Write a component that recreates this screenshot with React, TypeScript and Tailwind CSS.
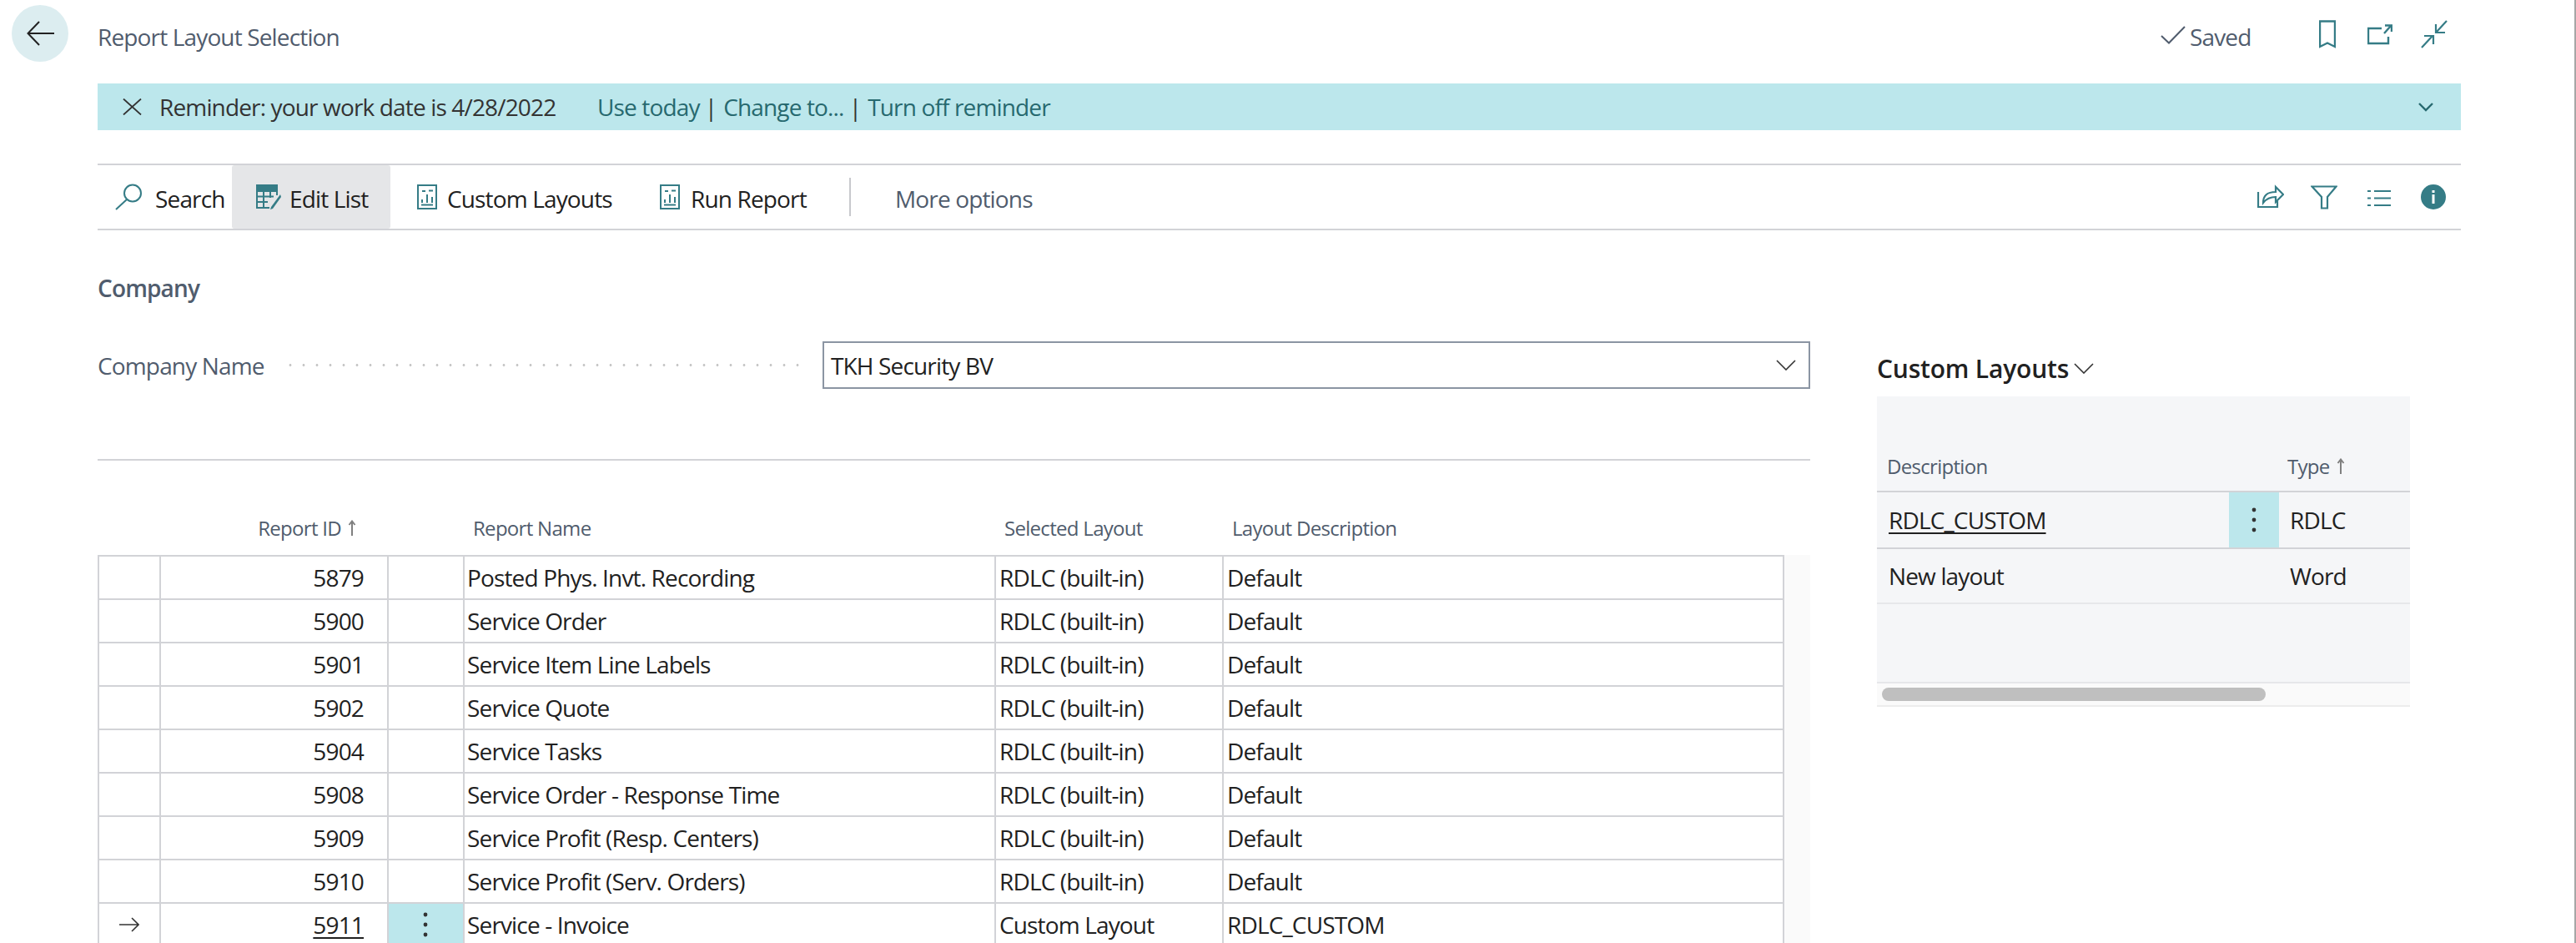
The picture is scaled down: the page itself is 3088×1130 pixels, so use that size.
const teal = "#357c86";

const rows = [
  { id: "5879", name: "Posted Phys. Invt. Recording", layout: "RDLC (built-in)", desc: "Default" },
  { id: "5900", name: "Service Order", layout: "RDLC (built-in)", desc: "Default" },
  { id: "5901", name: "Service Item Line Labels", layout: "RDLC (built-in)", desc: "Default" },
  { id: "5902", name: "Service Quote", layout: "RDLC (built-in)", desc: "Default" },
  { id: "5904", name: "Service Tasks", layout: "RDLC (built-in)", desc: "Default" },
  { id: "5908", name: "Service Order - Response Time", layout: "RDLC (built-in)", desc: "Default" },
  { id: "5909", name: "Service Profit (Resp. Centers)", layout: "RDLC (built-in)", desc: "Default" },
  { id: "5910", name: "Service Profit (Serv. Orders)", layout: "RDLC (built-in)", desc: "Default" },
  { id: "5911", name: "Service - Invoice", layout: "Custom Layout", desc: "RDLC_CUSTOM", current: true },
];

function SortArrow() {
  return (
    <svg width="10" height="20" viewBox="0 0 10 20" fill="none" stroke="#808080" strokeWidth="2">
      <path d="M5 19V2M1.5 6L5 1.5L8.5 6" />
    </svg>
  );
}

function Kebab() {
  return (
    <svg width="6" height="32" viewBox="0 0 6 32" fill="#333">
      <circle cx="3" cy="4" r="2.4" />
      <circle cx="3" cy="16" r="2.4" />
      <circle cx="3" cy="28" r="2.4" />
    </svg>
  );
}

function ReportIcon() {
  return (
    <svg width="24" height="30" viewBox="0 0 24 30" fill="none" stroke={teal} strokeWidth="2">
      <rect x="1" y="1" width="22" height="28" />
      <path d="M6 8h4M6 22v-4M12 22V12M18 22v-7M5 24.5h14M14 7.5h5" />
    </svg>
  );
}

function Dots() {
  return <div className="flex-1 mx-[20px] h-[3px] bg-[radial-gradient(circle,#c8c8c8_1.4px,transparent_1.6px)] bg-[length:16px_3px]" />;
}

export default function App() {
  return (
    <div className="w-[3088px] h-[1130px] overflow-hidden bg-white border-r-2 border-[#a6a6a6] font-['Open_Sans',sans-serif] text-[28px] text-[#212121] tracking-[-0.85px]">
      {/* Title bar */}
      <div className="flex items-center h-[76px] pl-[14px] pr-[152px] pt-[4px]">
        <div className="w-[68px] h-[68px] rounded-full bg-[#dcedf0] flex items-center justify-center shrink-0">
          <svg width="33" height="30" viewBox="0 0 33 30" fill="none" stroke="#222" strokeWidth="2">
            <path d="M33 15H2M15 1L1.5 15L15 29" />
          </svg>
        </div>
        <div className="ml-[35px] text-[#505c6d] pt-[8px] flex-1">Report Layout Selection</div>
        <svg className="mt-[4px]" width="30" height="22" viewBox="0 0 30 22" fill="none" stroke="#505c6d" strokeWidth="2">
          <path d="M1 12l9 8.5L29 1" />
        </svg>
        <div className="ml-[5px] w-[155px] text-[#505c6d] pt-[8px]">Saved</div>
        <svg className="mt-[2px]" width="20" height="34" viewBox="0 0 20 34" fill="none" stroke={teal} strokeWidth="2.4">
          <path d="M1 1.5h18v30.5l-9-4.5-9 4.5z" />
        </svg>
        <svg className="ml-[38px] mt-[2px]" width="30" height="26" viewBox="0 0 30 26" fill="none" stroke={teal} strokeWidth="2.4">
          <path d="M17 6H1v18h24V16M20 12l8-9M21 2.5h8V10" />
        </svg>
        <svg className="ml-[34px] mt-[2px]" width="32" height="34" viewBox="0 0 32 34" fill="none" stroke={teal} strokeWidth="2.2">
          <path d="M31 1L19 14M18 5v10h11M1 33l13-14M4 19h11v10" />
        </svg>
      </div>

      {/* Reminder banner */}
      <div className="flex items-center h-[56px] mt-[24px] ml-[117px] mr-[136px] bg-[#bce7ec] pl-[30px] pr-[33px]">
        <svg width="23" height="20" viewBox="0 0 23 20" fill="none" stroke="#333" strokeWidth="1.8">
          <path d="M1 0.5L22 19.5M22 0.5L1 19.5" />
        </svg>
        <span className="ml-[21px] w-[525px] text-[#333]">Reminder: your work date is 4/28/2022</span>
        <span className="text-[#27696f]">Use today</span>
        <span className="ml-[6px] text-[#333]">|</span>
        <span className="ml-[8px] text-[#27696f]">Change to...</span>
        <span className="ml-[6px] text-[#333]">|</span>
        <span className="ml-[8px] text-[#27696f] flex-1">Turn off reminder</span>
        <svg width="18" height="11" viewBox="0 0 18 11" fill="none" stroke="#27696f" strokeWidth="2.4">
          <path d="M1 1l8 8 8-8" />
        </svg>
      </div>

      {/* Action bar */}
      <div className="flex items-center h-[80px] mt-[40px] ml-[117px] mr-[136px] border-y-2 border-[#d2d3d7]">
        <div className="flex items-center h-full w-[161px] pl-[21px]">
          <svg width="33" height="32" viewBox="0 0 33 32" fill="none" stroke={teal} strokeWidth="2">
            <circle cx="21" cy="11.5" r="10" />
            <path d="M14 19L1 31" />
          </svg>
          <span className="ml-[15px] pt-[3px]">Search</span>
        </div>
        <div className="flex items-center h-full w-[190px] pl-[29px] bg-[#e5e6e8] rounded-[3px]">
          <svg width="30" height="30" viewBox="0 0 30 30" fill="none" stroke={teal} strokeWidth="2">
            <rect x="1" y="1" width="24" height="7" fill={teal} />
            <path d="M1 8v20h15M1 14.5h20M1 21h13M9 8v20M17 8v8M25 8v5" />
            <path d="M29 12L18 27l-1 3 3-1L30 15z" fill={teal} stroke="none" />
          </svg>
          <span className="ml-[10px] pt-[3px]">Edit List</span>
        </div>
        <div className="flex items-center h-full w-[323px] pl-[32px]">
          <ReportIcon />
          <span className="ml-[12px] pt-[3px]">Custom Layouts</span>
        </div>
        <div className="flex items-center h-full w-[227px]">
          <ReportIcon />
          <span className="ml-[13px] pt-[3px]">Run Report</span>
        </div>
        <div className="w-[2px] h-[46px] bg-[#c8c9cd]" />
        <span className="ml-[53px] pt-[3px] text-[#505c6d] flex-1">More options</span>
        <svg className="mb-[4px]" width="32" height="30" viewBox="0 0 32 30" fill="none" stroke={teal} strokeWidth="2.2">
          <path d="M1 11v18h23v-7" />
          <path d="M7 24c0-9 5-13 15-13V5l9 9-9 9v-6c-7 0-11 2-15 7z" />
        </svg>
        <svg className="ml-[32px]" width="32" height="29" viewBox="0 0 32 29" fill="none" stroke={teal} strokeWidth="2.2">
          <path d="M1.5 1.5h29L20 14v13.5h-7V14z" />
        </svg>
        <svg className="ml-[36px] mt-[3px]" width="28" height="21" viewBox="0 0 28 21" fill="none" stroke={teal} strokeWidth="2.2">
          <path d="M0 2h4M8 2h20M0 10.5h4M8 10.5h20M0 19h4M8 19h20" />
        </svg>
        <div className="ml-[36px] mr-[18px] w-[30px] h-[30px] rounded-full bg-[#357c86] flex items-center justify-center">
          <svg width="4" height="16" viewBox="0 0 4 16" fill="#fff">
            <rect x="0.5" y="0" width="3" height="3" />
            <rect x="0.5" y="5" width="3" height="11" />
          </svg>
        </div>
      </div>

      {/* Content */}
      <div className="flex ml-[117px]">
        <div className="w-[2053px] shrink-0">
          <div className="h-[36px] mt-[51px] flex items-center font-semibold text-[#505c6d]">Company</div>
          <div className="flex items-center mt-[46px] h-[57px]">
            <span className="text-[#505c6d] w-[203px] shrink-0 whitespace-nowrap">Company Name</span>
            <Dots />
            <div className="w-[1184px] h-[57px] shrink-0 border-2 border-[#8b95a3] flex items-center justify-between pl-[8px] pr-[15px]">
              <span>TKH Security BV</span>
              <svg width="24" height="13" viewBox="0 0 24 13" fill="none" stroke="#333" strokeWidth="1.6">
                <path d="M1 1l11 11L23 1" />
              </svg>
            </div>
          </div>
          <div className="h-[2px] mt-[84px] bg-[#d2d3d7]" />

          {/* Header row */}
          <div className="grid grid-cols-[74px_273px_91px_637px_273px_705px] h-[113px] items-center pt-[54px] pb-[6px] text-[24px] text-[#505c6d] tracking-[-0.7px]">
            <div />
            <div className="flex justify-end items-center gap-[8px] pr-[37px]">
              Report ID <SortArrow />
            </div>
            <div />
            <div className="pl-[12px]">Report Name</div>
            <div className="pl-[12px]">Selected Layout</div>
            <div className="pl-[12px]">Layout Description</div>
          </div>

          {/* Table rows */}
          <div className="flex">
            <div className="w-[2022px] border-r-2 border-[#d2d3d7]">
              {rows.map((row) => (
                <div
                  key={row.id}
                  className="grid grid-cols-[74px_273px_91px_637px_273px_672px] h-[52px] border-t-2 border-[#d2d3d7]"
                >
                  <div className="border-l-2 border-[#d2d3d7] flex items-center justify-center">
                    {row.current && (
                      <svg width="24" height="18" viewBox="0 0 24 18" fill="none" stroke="#333" strokeWidth="1.6">
                        <path d="M0 9h23M15 1l8 8-8 8" />
                      </svg>
                    )}
                  </div>
                  <div className="border-l-2 border-[#d2d3d7] flex items-center justify-end pr-[28px]">
                    <span className={row.current ? "underline underline-offset-4" : ""}>{row.id}</span>
                  </div>
                  <div className={`border-l-2 border-[#d2d3d7] flex items-center justify-center pr-[2px] ${row.current ? "bg-[#bce7ec]" : ""}`}>
                    {row.current && <Kebab />}
                  </div>
                  <div className="border-l-2 border-[#d2d3d7] flex items-center pl-[3px]">{row.name}</div>
                  <div className="border-l-2 border-[#d2d3d7] flex items-center pl-[4px]">{row.layout}</div>
                  <div className="border-l-2 border-[#d2d3d7] flex items-center pl-[4px]">{row.desc}</div>
                </div>
              ))}
            </div>
            <div className="w-[31px] bg-[#fafafa]" />
          </div>
        </div>

        {/* Custom Layouts part */}
        <div className="ml-[80px] w-[639px]">
          <div className="flex items-center h-[40px] mt-[145px] font-semibold text-[30px] tracking-[-0.2px]">
            Custom Layouts
            <svg className="ml-[6px]" width="24" height="13" viewBox="0 0 24 13" fill="none" stroke="#333" strokeWidth="1.6">
              <path d="M1 1l11 11L23 1" />
            </svg>
          </div>
          <div className="mt-[14px] bg-[#f5f6f8]">
            <div className="flex items-end h-[115px] pb-[11px] text-[24px] text-[#505c6d] border-b-2 border-[#d2d3d7] tracking-[-0.7px]">
              <span className="ml-[12px] w-[480px]">Description</span>
              <span className="flex items-center gap-[8px]">
                Type <SortArrow />
              </span>
            </div>
            <div className="flex h-[68px] border-b-2 border-[#d2d3d7]">
              <div className="w-[422px] pl-[14px] flex items-center">
                <span className="underline underline-offset-4">RDLC_CUSTOM</span>
              </div>
              <div className="w-[60px] bg-[#bce7ec] flex items-center justify-center">
                <Kebab />
              </div>
              <div className="pl-[13px] flex items-center">RDLC</div>
            </div>
            <div className="flex h-[66px] border-b-2 border-[#e6e7ea]">
              <div className="w-[482px] pl-[14px] flex items-center">New layout</div>
              <div className="pl-[13px] flex items-center">Word</div>
            </div>
            <div className="h-[95px] border-b-2 border-[#e6e7ea]" />
            <div className="h-[28px] bg-[#fafafa] border-b-2 border-[#ececec] pt-[5px] pl-[6px]">
              <div className="w-[460px] h-[16px] rounded-full bg-[#bfbfbf]" />
            </div>
          </div>
        </div>
      </div>
    </div>
  );
}
